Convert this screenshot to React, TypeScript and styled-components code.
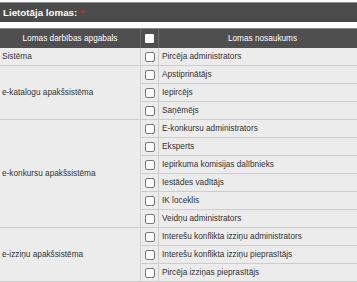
import React from "react";
import styled, { createGlobalStyle } from "styled-components";

const Global = createGlobalStyle`
  html, body { margin: 0; padding: 0; background: #ffffff; overflow: hidden; }
  body { font-family: "Liberation Sans", Arial, sans-serif; }
`;

const Page = styled.div`
  width: 366px;
  padding-top: 2px;
`;

const TitleBar = styled.div`
  height: 19px;
  border-top: 1px solid #8e8e8e;
  background: #4b4b4b;
  color: #ffffff;
  font-weight: bold;
  font-size: 9.75px;
  display: flex;
  align-items: center;
  padding-left: 3px;
`;

const Req = styled.span`
  color: #e3262d;
  margin-left: 3px;
`;

const Table = styled.table`
  margin-top: 6px;
  width: 366px;
  border-collapse: collapse;
  table-layout: fixed;
  font-size: 8.25px;
  color: #333333;
`;

const Th = styled.th<{ $w?: number }>`
  ${(p) => (p.$w ? `width: ${p.$w}px;` : "")}
  height: 19px;
  padding: 0;
  background: #4f4f4f;
  color: #ffffff;
  font-weight: normal;
  text-align: center;
  border-top: 1px solid #8a8a8a;
  border-left: 1px solid #6a6a6a;
  &:first-child { border-left: none; }
`;

const Td = styled.td`
  height: 17px;
  padding: 0 0 0 3px;
  background: #ececec;
  border-bottom: 1px solid #cdcdcd;
  border-left: 1px solid #cdcdcd;
  white-space: nowrap;
  vertical-align: middle;
`;

const GroupTd = styled.td`
  padding: 0 0 0 2px;
  background: #ececec;
  border-bottom: 1px solid #cdcdcd;
  vertical-align: middle;
  white-space: nowrap;
`;

const BoxTd = styled.td`
  padding: 0;
  background: #ececec;
  border-bottom: 1px solid #cdcdcd;
  border-left: 1px solid #cdcdcd;
  text-align: center;
  vertical-align: middle;
`;

const Box = styled.span<{ $head?: boolean }>`
  display: inline-block;
  vertical-align: middle;
  box-sizing: border-box;
  width: ${(p) => (p.$head ? 9 : 10)}px;
  height: ${(p) => (p.$head ? 9 : 10)}px;
  background: #ffffff;
  border: ${(p) => (p.$head ? "none" : "1px solid #7a7a7a")};
  border-radius: ${(p) => (p.$head ? 1 : 2)}px;
`;

const groups: { area: string; roles: string[] }[] = [
  { area: "Sistēma", roles: ["Pircēja administrators"] },
  { area: "e-katalogu apakšsistēma", roles: ["Apstiprinātājs", "Iepircējs", "Saņēmējs"] },
  {
    area: "e-konkursu apakšsistēma",
    roles: [
      "E-konkursu administrators",
      "Eksperts",
      "Iepirkuma komisijas dalībnieks",
      "Iestādes vadītājs",
      "IK loceklis",
      "Veidņu administrators",
    ],
  },
  {
    area: "e-izziņu apakšsistēma",
    roles: [
      "Interešu konflikta izziņu administrators",
      "Interešu konflikta izziņu pieprasītājs",
      "Pircēja izziņas pieprasītājs",
    ],
  },
];

export default function App() {
  return (
    <>
      <Global />
      <Page>
        <TitleBar>
          Lietotāja lomas:<Req>*</Req>
        </TitleBar>
        <Table>
          <thead>
            <tr>
              <Th $w={140}>Lomas darbības apgabals</Th>
              <Th $w={17}>
                <Box $head />
              </Th>
              <Th>Lomas nosaukums</Th>
            </tr>
          </thead>
          <tbody>
            {groups.map((g) =>
              g.roles.map((r, i) => (
                <tr key={g.area + r}>
                  {i === 0 && <GroupTd rowSpan={g.roles.length}>{g.area}</GroupTd>}
                  <BoxTd>
                    <Box />
                  </BoxTd>
                  <Td>{r}</Td>
                </tr>
              ))
            )}
          </tbody>
        </Table>
      </Page>
    </>
  );
}
